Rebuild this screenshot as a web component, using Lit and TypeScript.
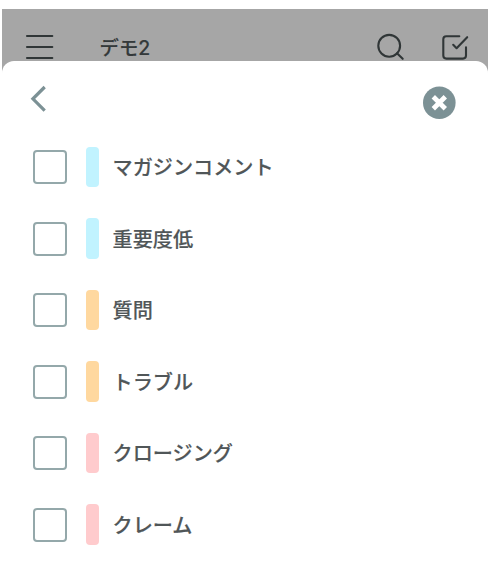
import { LitElement, html, css } from "lit";
import { customElement, property } from "lit/decorators.js";
import { styleMap } from "lit/directives/style-map.js";

interface Tag {
  label: string;
  color: string;
}

const TAGS: Tag[] = [
  { label: "マガジンコメント", color: "#c1f3ff" },
  { label: "重要度低", color: "#c1f3ff" },
  { label: "質問", color: "#ffd89f" },
  { label: "トラブル", color: "#ffd89f" },
  { label: "クロージング", color: "#ffcbcd" },
  { label: "クレーム", color: "#ffcbcd" },
];

@customElement("tag-row")
export class TagRow extends LitElement {
  @property() label = "";
  @property() color = "";

  static styles = css`
    :host {
      display: flex;
      align-items: center;
      height: 71.55px;
    }
    .box {
      box-sizing: border-box;
      width: 34px;
      height: 34px;
      border: 2px solid #94a8aa;
      border-radius: 4px;
      margin-right: 18.5px;
    }
    .bar {
      width: 13.5px;
      height: 40.5px;
      border-radius: 4px;
      margin-right: 13.5px;
    }
    .label {
      font-size: 20.15px;
      line-height: 28px;
      font-weight: 500;
      color: #505658;
      -webkit-text-stroke: 0.15px #505658;
      white-space: nowrap;
    }
  `;

  render() {
    return html`
      <span class="box"></span>
      <span class="bar" style=${styleMap({ background: this.color })}></span>
      <span class="label">${this.label}</span>
    `;
  }
}

@customElement("app-root")
export class AppRoot extends LitElement {
  static styles = css`
    :host {
      display: block;
      box-sizing: border-box;
      height: 567px;
      padding: 9px 8px 0 2px;
      overflow: hidden;
      background: #fff;
      font-family: "Noto Sans CJK JP", sans-serif;
    }
    .screen {
      background: #a6a6a6;
    }
    .header {
      display: flex;
      align-items: flex-start;
      height: 52px;
      box-sizing: border-box;
      padding: 22px 18px 0 23px;
      color: #34393a;
    }
    svg {
      display: block;
      flex: none;
      fill: none;
    }
    .header svg {
      stroke: #303637;
      stroke-width: 2.1;
      stroke-linecap: round;
      stroke-linejoin: round;
    }
    .title {
      flex: 1;
      margin: 4px 0 0 44.5px;
      font-family: "Inter", "Noto Sans CJK JP", sans-serif;
      font-size: 19.4px;
      line-height: 26px;
      font-weight: 500;
      -webkit-text-stroke: 0.15px #34393a;
    }
    .check {
      margin-left: 34px;
    }
    .sheet {
      background: #fff;
      border-radius: 12px 12px 0 0;
      height: 506px;
    }
    .bar {
      display: flex;
      justify-content: space-between;
      box-sizing: border-box;
      height: 70.2px;
      padding: 23px 31px 0 27px;
    }
    .close {
      margin-top: 2px;
    }
    .list {
      padding-left: 31px;
    }
  `;

  render() {
    return html`
      <div class="screen">
        <div class="header">
          <svg width="30" height="30" viewBox="0 0 30 30">
            <path d="M2 5H27.3M2 16H27.3M2 27H27.3" />
          </svg>
          <div class="title">デモ2</div>
          <svg width="30" height="30" viewBox="0 0 30 30">
            <circle cx="12.2" cy="14.8" r="10.9" />
            <path d="M20 22.3L25.7 27.8" />
          </svg>
          <svg class="check" width="29" height="30" viewBox="0 0 29 30">
            <path
              d="M18.3 5.2H5.3Q2.3 5.2 2.3 8.2V24.6Q2.3 27.6 5.3 27.6H22Q25 27.6 25 24.6V16.4M12.2 13.8L15.6 17.2L26.2 6.2"
            />
          </svg>
        </div>
        <div class="sheet">
          <div class="bar">
            <svg width="20" height="30" viewBox="0 0 20 30">
              <path
                d="M15.7 3L3.9 14.8L15.7 26.6"
                stroke="#7c9195"
                stroke-width="3.2"
              />
            </svg>
            <svg class="close" width="34" height="34" viewBox="0 0 34 34">
              <circle cx="16.3" cy="16.8" r="16.3" fill="#7c9195" />
              <path
                d="M10.3 10.8L22.3 22.8M22.3 10.8L10.3 22.8"
                stroke="#fff"
                stroke-width="4.8"
              />
            </svg>
          </div>
          <div class="list">
            ${TAGS.map(
              (t) => html`<tag-row .label=${t.label} .color=${t.color}></tag-row>`,
            )}
          </div>
        </div>
      </div>
    `;
  }
}
